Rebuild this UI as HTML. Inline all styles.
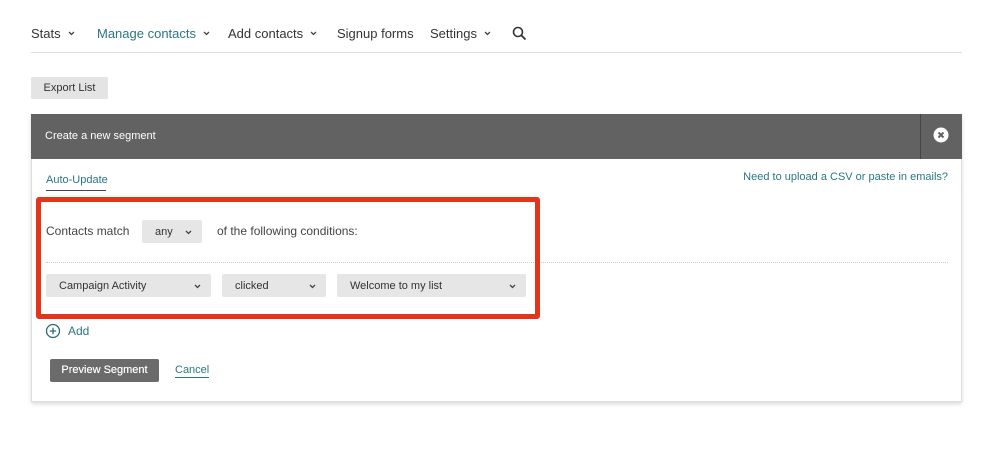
<!DOCTYPE html>
<html><head><style>
*{margin:0;padding:0;box-sizing:border-box}
body{width:1007px;height:453px;background:#fff;font-family:"Liberation Sans",sans-serif;position:relative;overflow:hidden;color:#333}
.a{position:absolute;white-space:nowrap}
.nav{font-size:13px;color:#333;top:26px}
.car{display:inline-block;width:7px;height:5px;margin-left:7px;vertical-align:2px}
.sel{position:absolute;background:#e6e6e6;border-radius:2px;font-size:11px;color:#333;padding-left:13px;line-height:24px;height:23px}
.sel svg{position:absolute;right:10px;top:10px}
.teal{color:#2b7681}
</style></head><body>
<svg width="0" height="0" style="position:absolute"><symbol id="c" viewBox="0 0 7 5"><path d="M1 1L3.5 3.5L6 1" fill="none" stroke="#444" stroke-width="1.3"/></symbol></svg>
<div class="a nav" style="left:31px">Stats<svg class="car"><use href="#c"/></svg></div>
<div class="a nav teal" style="left:97px">Manage contacts<svg class="car"><use href="#c"/></svg></div>
<div class="a nav" style="left:228px">Add contacts<svg class="car"><use href="#c"/></svg></div>
<div class="a nav" style="left:337px">Signup forms</div>
<div class="a nav" style="left:430px">Settings<svg class="car"><use href="#c"/></svg></div>
<svg class="a" style="left:512px;top:26px" width="15" height="15" viewBox="0 0 15 15"><circle cx="6" cy="6" r="4.5" fill="none" stroke="#333" stroke-width="1.6"/><path d="M9.3 9.3L13.5 13.5" stroke="#333" stroke-width="1.8"/></svg>
<div class="a" style="left:31px;top:52px;width:931px;height:1px;background:#ddd"></div>
<div class="a" style="left:31px;top:77px;width:77px;height:22px;background:#e4e4e4;border-radius:2px;font-size:11px;line-height:22px;text-align:center;color:#333">Export List</div>
<div class="a" style="left:31px;top:114px;width:931px;height:288px;border:1px solid #ddd;box-shadow:0 2px 4px rgba(0,0,0,.15);background:#fff"></div>
<div class="a" style="left:31px;top:114px;width:931px;height:45px;background:#626262"></div>
<div class="a" style="left:920px;top:114px;width:1px;height:45px;background:#444"></div>
<div class="a" style="left:45px;top:130px;font-size:11px;color:#fff">Create a new segment</div>
<svg class="a" style="left:933px;top:127px" width="16" height="16"><circle cx="8" cy="8" r="7.5" fill="#fff"/><path d="M5.5 5.5L10.5 10.5M10.5 5.5L5.5 10.5" stroke="#626262" stroke-width="2"/></svg>
<div class="a teal" style="left:46px;top:174px;font-size:11px">Auto-Update</div>
<div class="a" style="left:46px;top:190px;width:60px;height:1px;background:#4a3e5c"></div>
<div class="a teal" style="right:59px;top:171px;font-size:11px">Need to upload a CSV or paste in emails?</div>
<div class="a" style="left:46px;top:262px;width:902px;border-top:1px dotted #ccc"></div>
<div class="a" style="left:36px;top:197px;width:504px;height:122px;border:5px solid #e2351c;border-radius:3px"></div>
<div class="a" style="left:46px;top:224px;font-size:12px;color:#444">Contacts match</div>
<div class="sel" style="left:142px;top:220px;width:60px">any<svg width="7" height="5"><use href="#c"/></svg></div>
<div class="a" style="left:217px;top:224px;font-size:12px;color:#444">of the following conditions:</div>
<div class="sel" style="left:46px;top:274px;width:165px">Campaign Activity<svg width="7" height="5"><use href="#c"/></svg></div>
<div class="sel" style="left:222px;top:274px;width:104px">clicked<svg width="7" height="5"><use href="#c"/></svg></div>
<div class="sel" style="left:337px;top:274px;width:189px">Welcome to my list<svg width="7" height="5"><use href="#c"/></svg></div>
<svg class="a" style="left:45px;top:323px" width="16" height="16"><circle cx="8" cy="8" r="6.5" fill="none" stroke="#2b6a75" stroke-width="1.3"/><path d="M8 4.8V11.2M4.8 8H11.2" stroke="#2b6a75" stroke-width="1.3"/></svg>
<div class="a teal" style="left:68px;top:324px;font-size:12px">Add</div>
<div class="a" style="left:50px;top:359px;width:109px;height:23px;background:#6b6b6b;border-radius:2px;color:#fff;font-size:11px;line-height:23px;text-align:center;text-shadow:0 0 0.4px #fff">Preview Segment</div>
<div class="a teal" style="left:175px;top:364px;font-size:11px;border-bottom:1px solid #2b7681;line-height:13px">Cancel</div>
</body></html>
